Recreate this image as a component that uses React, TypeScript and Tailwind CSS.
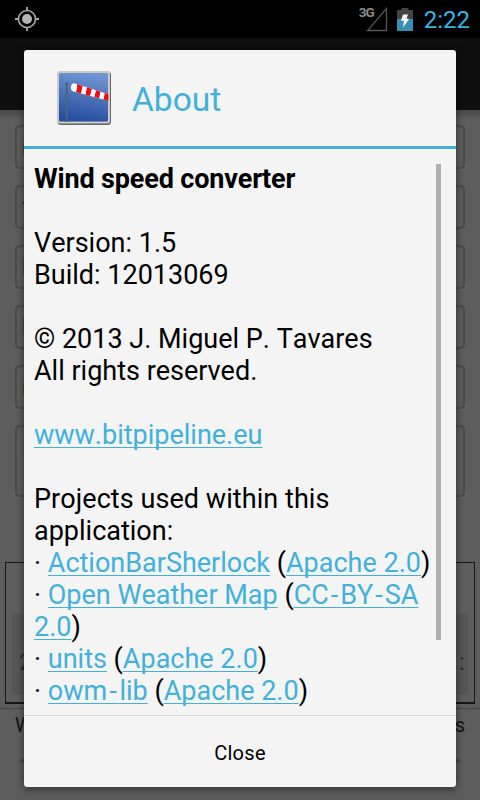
import React from 'react';

const fields = [
  { hint: 'm', height: 'h-11' },
  { hint: 'f', height: 'h-11' },
  { hint: 'k', height: 'h-11' },
  { hint: 'k', height: 'h-11' },
  { hint: 'm', height: 'h-11' },
  { hint: 'B', height: 'h-[72px]' },
];

function Link({ children }: { children: React.ReactNode }) {
  return (
    <a
      href="#"
      className="text-[#41b1dc] underline decoration-[#41b1dc] decoration-1 underline-offset-[3px] [text-decoration-skip-ink:none]"
    >
      {children}
    </a>
  );
}

function AppIcon() {
  return (
    <svg width="56" height="56" viewBox="0 0 56 56">
      <defs>
        <linearGradient id="sky" x1="0.6" y1="0" x2="0.4" y2="1">
          <stop offset="0" stopColor="#7195d3" />
          <stop offset="1" stopColor="#254c9e" />
        </linearGradient>
        <clipPath id="frame">
          <rect x="3" y="3" width="49.5" height="49" rx="1" />
        </clipPath>
      </defs>
      <rect x="1.5" y="1.5" width="53.5" height="53.5" rx="3.5" fill="#62686d" />
      <rect x="1" y="1" width="53" height="52.5" rx="3" fill="#c9cac2" />
      <rect x="3" y="3" width="49" height="48.5" rx="1.5" fill="url(#sky)" />
      <g clipPath="url(#frame)">
        <path d="M10.700 13.500V52" stroke="#48677a" strokeWidth="2" />
        <path d="M9 13.500h3.500" stroke="#48677a" strokeWidth="2" />
        <path d="M18 13.200L53 24.500v6.500L17 21.300q-2.500-1-2-4.500t3-3.600z" fill="#fff" />
        <path d="M21 14l5.500 2-1.500 7.500-5-1.400q2-3.500 1-8.100zM31 17.300l4.800 1.600-1.800 7-4.500-1.200zM40 20.200l4.500 1.500-1.500 6.600-4.500-1.200zM48.800 23l4.200 1.500v6.500l-5.500-1.500z" fill="#ef0b12" />
      </g>
    </svg>
  );
}

function StatusBar() {
  return (
    <div className="flex h-[38px] items-center bg-black pr-[10px] pl-[14px]">
      <svg width="26" height="26" viewBox="0 0 26 26" fill="none">
        <circle cx="13" cy="13" r="8.5" stroke="#aaa" strokeWidth="1.6" />
        <circle cx="13" cy="13" r="5" fill="#b4b4b4" />
        <path d="M13 1v4M13 21v4M1 13h4M21 13h4" stroke="#aaa" strokeWidth="1.8" />
      </svg>
      <span className="mb-[13px] ml-auto text-[13.5px] leading-none font-bold tracking-[-1px] text-[#8a8a8a]">3G</span>
      <svg className="-ml-[8px]" width="22" height="25" viewBox="0 0 22 25" fill="none">
        <path d="M20.500 1.500V23.500H1.500z" stroke="#555" strokeWidth="1.3" />
      </svg>
      <svg className="mt-px ml-[9px]" width="16" height="24" viewBox="0 0 16 24">
        <path d="M4.500 0h7v2H16v9H0V2h4.500z" fill="#444" />
        <path d="M0 11h16v12H0z" fill="#3b8fb2" />
        <path d="M6 6.500h5L9.500 10.500l2.500.5-6 8.500 1-6.500-3-.5z" fill="#fff" />
      </svg>
      <span className="mt-[2px] ml-[11px] text-[24px] leading-none text-[#33b5e5]">2:22</span>
    </div>
  );
}

// Converter screen, dimmed behind the dialog
function ConverterScreen() {
  return (
    <div className="flex h-[762px] flex-col">
      <div className="h-[72px] shrink-0 bg-[#0f0f0f]" />
      <div className="flex grow flex-col bg-[#5d5d5d] bg-linear-to-b from-[#484848] to-[#5d5d5d] to-[10px] pt-[15px]">
        <div className="flex flex-col gap-4 px-[15px]">
          {fields.map((field, i) => (
            <div
              key={i}
              className={`${field.height} rounded-[5px] border-2 border-[#4b4b4b] pt-1 pl-[5px] text-[24px] leading-8 text-[#252525]`}
            >
              {field.hint}
            </div>
          ))}
        </div>
        <div className="mx-[5px] mt-[65px] flex h-[142px] shrink-0 flex-col border border-b-2 border-[#161616] px-[6px] pt-[50px]">
          <div className="flex h-[82px] items-center justify-between bg-[#565656] pt-4 pr-px pl-[7px] text-[24px] text-[#2d2d2d]">
            <span>2</span>
            <span className="w-2">:</span>
          </div>
        </div>
        <div className="mt-1 border-t border-[#454545]" />
        <div className="flex justify-between px-[15px] text-[20px] leading-8 text-[#151515]">
          <span>W</span>
          <span>s</span>
        </div>
        <div className="mx-[20px] mt-[18px] h-1 rounded-full bg-[#4b4b4b]" />
      </div>
    </div>
  );
}

function AboutDialog() {
  return (
    <div className="absolute top-[50px] left-6 flex h-[737px] w-[432px] flex-col rounded-[3px] bg-[#f4f4f4] shadow-[0_2px_8px_rgba(0,0,0,0.5)]">
      <div className="flex h-24 shrink-0 items-center pl-8">
        <AppIcon />
        <h1 className="mt-1 ml-5 text-[33.5px] leading-none text-[#41b1dc]">About</h1>
      </div>
      <div className="h-[3px] shrink-0 bg-[#41b1dc]" />
      <div className="flex h-[566px] shrink-0 justify-between pr-[15px] pl-[10px]">
        <div className="pt-[14px] text-[27px] leading-8 whitespace-nowrap text-black">
          <p className="font-bold tracking-[-0.15px]">Wind speed converter</p>
          <br />
          <p>Version: 1.5</p>
          <p>Build: 12013069</p>
          <br />
          <p>© 2013 J. Miguel P. Tavares</p>
          <p>All rights reserved.</p>
          <br />
          <p><Link>www.bitpipeline.eu</Link></p>
          <br />
          <p className="tracking-[0.06px]">Projects used within this</p>
          <p>application:</p>
          <p>· <Link>ActionBarSherlock</Link> (<Link>Apache 2.0</Link>)</p>
          <p>
            · <Link>Open Weather Map</Link> (
            <Link>C<span className="tracking-[2px]">C-</span>B<span className="tracking-[2px]">Y-</span>SA</Link>
          </p>
          <p><Link>2.0</Link>)</p>
          <p>· <Link>units</Link> (<Link>Apache 2.0</Link>)</p>
          <p>· <Link>ow<span className="tracking-[2.4px]">m-</span>lib</Link> (<Link>Apache 2.0</Link>)</p>
        </div>
        <div className="mt-[15px] -ml-5 h-[476px] w-[5px] shrink-0 bg-[#b0b0b0]" />
      </div>
      <button className="grow border-t border-[#d5d5d5] pt-0.5 text-[20px] tracking-[0.3px] text-black">Close</button>
    </div>
  );
}

export default function App() {
  return (
    <div className="relative h-[800px] w-[480px] overflow-hidden bg-black font-[Roboto,sans-serif] [font-kerning:none]">
      <StatusBar />
      <ConverterScreen />
      <AboutDialog />
    </div>
  );
}
